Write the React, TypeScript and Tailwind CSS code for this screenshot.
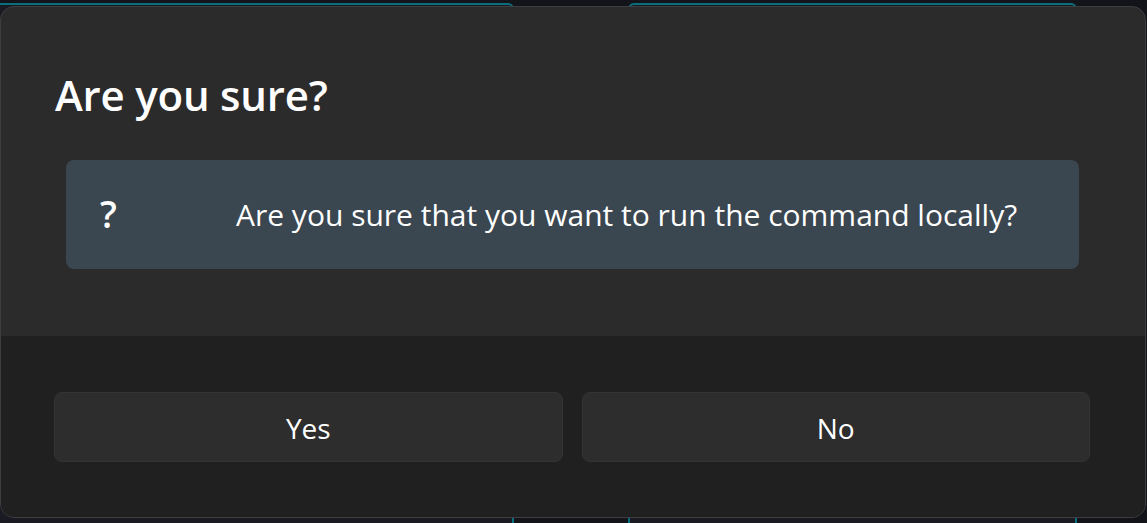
import React from "react";

export default function App() {
  return (
    <div className="relative w-[1147px] h-[523px] overflow-hidden bg-[#13131a] font-['Open_Sans','Noto_Sans',sans-serif]">
      {/* background cards behind the dialog */}
      <div className="absolute left-[-20px] top-[3px] w-[534px] h-[600px] rounded-tr-[6px] border-2 border-[#0a6f7c] bg-[#1a1a22]" />
      <div className="absolute left-[628px] top-[3px] w-[449px] h-[600px] rounded-t-[6px] border-2 border-[#0a6f7c] bg-[#1a1a22]" />

      {/* dialog */}
      <div className="absolute left-0 top-[6px] w-[1146px] h-[512px] flex flex-col overflow-hidden rounded-[14px] border border-[#3e3e42] bg-[#2b2b2b] text-white">
        <div className="flex-1 flex flex-col px-[54px]">
          <div className="pt-[58px] h-[153px] text-[42px] leading-[60px] font-semibold tracking-[-0.2px]">
            Are you sure?
          </div>
          <div className="ml-[11px] mr-[12px] h-[109px] flex items-center rounded-[8px] bg-[#3a4650] pl-[34px]">
            <span className="w-[136px] text-[37px] font-semibold leading-none pb-[2px]">?</span>
            <span className="text-[30px] leading-none">
              Are you sure that you want to run the command locally?
            </span>
          </div>
        </div>
        <div className="h-[181px] shrink-0 bg-[#202020] flex items-center gap-[19px] pl-[53px] pr-[55px]">
          <button className="flex-1 h-[70px] rounded-[8px] border border-[#343434] bg-[#2d2d2d] text-[28px] leading-none pt-[3px] text-white">
            Yes
          </button>
          <button className="flex-1 h-[70px] rounded-[8px] border border-[#343434] bg-[#2d2d2d] text-[28px] leading-none pt-[3px] text-white">
            No
          </button>
        </div>
      </div>
    </div>
  );
}
